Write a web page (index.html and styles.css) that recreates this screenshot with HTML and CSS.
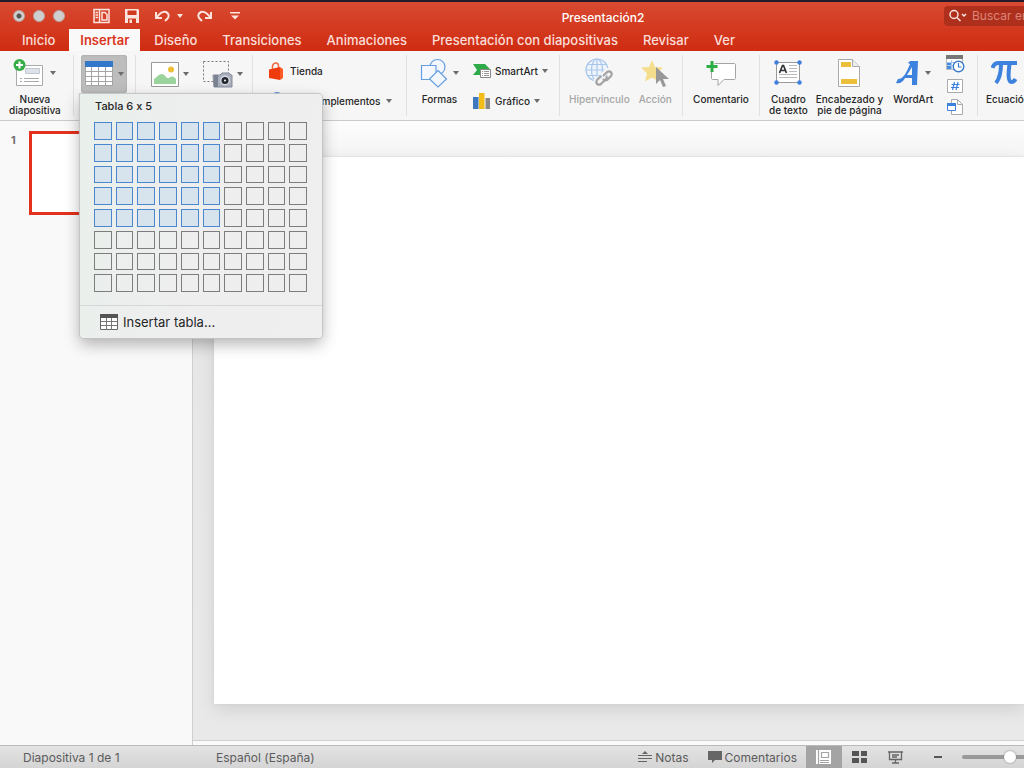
FILE: index.html
```html
<!DOCTYPE html>
<html lang="es">
<head>
<meta charset="utf-8">
<title>Presentación2</title>
<link rel="stylesheet" href="styles.css">
</head>
<body>
<header class="header">
  <div class="titlebar">
    <div class="lights">
      <button class="light light-dirty" aria-label="Cerrar"></button>
      <button class="light" aria-label="Minimizar"></button>
      <button class="light" aria-label="Ampliar"></button>
    </div>
    <div class="quick">
      <button class="plain" aria-label="Diseño de ventana"><svg width="17" height="16" viewBox="0 0 17 16" fill="none" stroke="#fbe3de" stroke-width="1.500"><path d="M1 1.500h15v13H1zM6.500 1.500v13"/><path d="M9 4.500h3l2 2V12H9z"/><path d="M2.500 4.500h2.500M2.500 7h2.500M2.500 9.500h2.500"/></svg></button>
      <button class="plain" aria-label="Guardar"><svg width="16" height="16" viewBox="0 0 16 16"><path d="M1 1h13l1 1v13H1z" fill="#fbe3de"/><path d="M3.500 2.500h9V7h-9zM4 10.500h8V15H4z" fill="#d03b20"/><path d="M5.500 11.500h2.500V15H5.500z" fill="#fbe3de"/></svg></button>
      <button class="plain" aria-label="Deshacer"><svg width="17" height="14" viewBox="0 0 17 14" fill="none" stroke="#fbe3de" stroke-width="2"><path d="M2 3v6h6M2.500 8.500C6 4 9 2 12 3c3 1.500 3.500 4.500 1.500 6.500L11 12"/></svg></button>
      <button class="plain" aria-label="Opciones de deshacer"><svg width="6" height="4" viewBox="0 0 6 4"><path d="M0 0h6L3 4z" fill="#fbe3de"/></svg></button>
      <button class="plain" aria-label="Rehacer"><svg width="16" height="14" viewBox="0 0 16 14" fill="none" stroke="#fbe3de" stroke-width="2"><path d="M14 3v6H8M13.500 8.500C10 4 7 2 4 3 1 4.500.5 7.500 2.500 9.500L5 12"/></svg></button>
      <button class="plain" aria-label="Personalizar"><svg width="10" height="8" viewBox="0 0 10 8" fill="#fbe3de"><path d="M0 0h10v1.500H0zM1 3.500h8L5 7.500z"/></svg></button>
    </div>
    <h1 class="title">Presentación2</h1>
    <label class="search">
      <svg width="19" height="14" viewBox="0 0 19 14" fill="none" stroke="#fbe3de" stroke-width="1.500"><circle cx="5" cy="5.500" r="4"/><path d="M8 8.500l3.500 3.500M13 5l2 2 2-2"/></svg>
      <input class="search-input" type="text" placeholder="Buscar en la presentación" aria-label="Buscar en la presentación">
    </label>
  </div>
  <nav class="tabs">
    <a class="tab" href="#inicio">Inicio</a>
    <a class="tab tab-active" href="#insertar">Insertar</a>
    <a class="tab" href="#diseno">Diseño</a>
    <a class="tab" href="#transiciones">Transiciones</a>
    <a class="tab" href="#animaciones">Animaciones</a>
    <a class="tab" href="#presentacion">Presentación con diapositivas</a>
    <a class="tab" href="#revisar">Revisar</a>
    <a class="tab" href="#ver">Ver</a>
  </nav>
</header>

<div class="ribbon">
  <div class="group g-new">
    <button class="big">
      <span class="icon-row"><svg width="32" height="31" viewBox="0 0 32 31"><path d="M3.500 7.500h26v20h-26z" fill="#fff" stroke="#aaa"/><path d="M12.500 10.500h14v5h-14z" fill="#dde2ea" stroke="#c2c8d0"/><path d="M7 20.500h2M11 20.500h15M7 23.500h2M11 23.500h15" stroke="#aaa"/><circle cx="6.500" cy="7" r="6" fill="#35ad46"/><path d="M6.500 3.500v7M3 7h7" stroke="#fff" stroke-width="2"/></svg><i class="caret"></i></span>
      <span>Nueva<br>diapositiva</span>
    </button>
  </div>
  <div class="group g-table">
    <div class="menu-host">
      <button class="table-button" aria-label="Tabla" aria-expanded="true"><svg width="30" height="26" viewBox="0 0 30 26"><path d="M1 1h27v24H1z" fill="#fff"/><path d="M1.500 6v18.500h27V6M1 10.500h27M1 15.500h27M1 20.500h27M7.500 6v19M14.500 6v19M21.500 6v19" fill="none" stroke="#a5a5a5"/><path d="M1 0h28v6H1z" fill="#3478ca"/></svg><i class="caret"></i></button>
      <div class="popover">
        <div class="pop-title">Tabla 6 x 5</div>
        <div class="cells" id="cells"></div>
        <button class="pop-item"><svg width="18" height="16" viewBox="0 0 18 16"><path d="M.5.500h17v15H.5z" fill="#fff" stroke="#666"/><path d="M1 7.500h16M1 11.500h16M6.500 4v12M11.500 4v12" stroke="#777"/><path d="M0 0h18v4H0z" fill="#555"/></svg>Insertar tabla...</button>
      </div>
    </div>
  </div>
  <div class="group g-media">
    <button class="drop" aria-label="Imagen"><svg width="28" height="25" viewBox="0 0 28 25"><path d="M.5.500h27v24H.5z" fill="#fff" stroke="#999"/><path d="M3 22v-5c3-2 5-5 8-5 3 0 4 5 7 4 3-2 4-2 7 1v5z" fill="#9bd39c"/><circle cx="20" cy="7.500" r="3" fill="#eebe35"/></svg><i class="caret"></i></button>
    <button class="drop" aria-label="Captura de pantalla"><svg width="30" height="28" viewBox="0 0 30 28"><path d="M.5 1.500h25v20H.5z" fill="none" stroke="#777" stroke-dasharray="2 2"/><path d="M10 15h7l2-2h7l2 2h1v12H11z" fill="#aab0be" stroke="#858b99"/><path d="M11 15h4v12h-4z" fill="#7b8292"/><circle cx="22" cy="20.500" r="5" fill="#d6d9df"/><circle cx="22" cy="20.500" r="3.500" fill="#242830"/><circle cx="22" cy="20.500" r="1" fill="#fff"/></svg><i class="caret"></i></button>
  </div>
  <div class="group g-addins stack">
    <button class="small"><svg width="16" height="19" viewBox="0 0 16 19"><path d="M4.500 7V4c1-4 6-4 6 0v2" fill="none" stroke="#f26a3d" stroke-width="1.500"/><path d="M1 7.500L12 5v13L1 16z" fill="#f03c0c"/><path d="M12 5l3 2v9l-3 2z" fill="#ff5b26"/></svg>Tienda</button>
    <button class="small"><svg width="16" height="18" viewBox="0 0 16 18"><circle cx="9" cy="4" r="4" fill="#4a88cf"/><path d="M2 8h12v8H2z" fill="#4a88cf"/></svg>Mis complementos<i class="caret"></i></button>
  </div>
  <div class="group g-shapes">
    <button class="big">
      <span class="icon-row"><svg width="28" height="30" viewBox="0 0 28 30" fill="#f4f8fe" stroke="#659fe0" stroke-width="1.200"><circle cx="17.500" cy="9" r="7.500"/><path d="M1.500 7.500h14.500v14H1.500z"/><path d="M18 12.500l8.500 8.500-8.500 8-8.500-8z"/></svg><i class="caret"></i></span>
      <span>Formas</span>
    </button>
    <div class="stack">
      <button class="small"><svg width="18" height="16" viewBox="0 0 18 16"><path d="M0 1h12l5 5h-9v6H0l4-5z" fill="#2eaa48"/><path d="M7.500 6.500h10v8h-10z" fill="#fff" stroke="#888"/><path d="M9 8.500h1M11 8.500h5M9 10.500h1M11 10.500h5M9 12.500h1M11 12.500h5" stroke="#999"/></svg>SmartArt<i class="caret"></i></button>
      <button class="small"><svg width="18" height="17" viewBox="0 0 18 17"><path d="M0 4h5.500v12H0z" fill="#3e79c0"/><path d="M6 0h5.500v16H6z" fill="#f2bd18"/><path d="M12.500 5h4.500v11h-4.500z" fill="#888"/></svg>Gráfico<i class="caret"></i></button>
    </div>
  </div>
  <div class="group g-links">
    <button class="big off" disabled>
      <span class="icon-row"><svg width="30" height="30" viewBox="0 0 30 30" fill="none" stroke="#a9c7ea" stroke-width="1.200"><circle cx="13" cy="12" r="11" fill="#edf4fc"/><path d="M2 12h22M4 6.500h18M4 17.500h15M13 1v22"/><ellipse cx="13" cy="12" rx="5.500" ry="11"/><g stroke="#f6f6f6" stroke-width="5"><path d="M18 18l5-5c3-2 6 1 4 4l-4 4M22 18l-1 3-5 5c-3 2-5-1-4-3l4-4"/></g><g stroke="#a3a3a3" stroke-width="2.200"><path d="M19 18l4-4c3-2 6 1 4 4l-4 4c-2 1-3 0-4-1M22 18c1 1 1 3-1 4l-4 4c-3 2-6-1-4-4l4-4"/></g></svg></span>
      <span>Hipervínculo</span>
    </button>
    <button class="big off" disabled>
      <span class="icon-row"><svg width="28" height="28" viewBox="0 0 28 28"><path d="M11 1l3 7 8 .5-6 6 2 8-7-4-7 4 2-8-6-6 8-.5z" fill="#f5dd8e"/><path d="M15 8v17l4-4 3 7 3-1-3-7h6z" fill="#989898"/></svg></span>
      <span>Acción</span>
    </button>
  </div>
  <div class="group g-comment">
    <button class="big">
      <span class="icon-row"><svg width="30" height="28" viewBox="0 0 30 28"><path d="M7 4.500h21c1 0 1.500.5 1.500 1.500v13c0 1-.5 1.500-1.500 1.500H18l-6 6v-6H7c-1 0-1.500-.5-1.500-1.500V6c0-1 .5-1.500 1.500-1.500z" fill="#fff" stroke="#a5a5a5"/><path d="M6 2v11M.5 7.500h11" stroke="#f6f6f6" stroke-width="5"/><path d="M6 2v11M.5 7.500h11" stroke="#2eac46" stroke-width="3"/></svg></span>
      <span>Comentario</span>
    </button>
  </div>
  <div class="group g-text">
    <button class="big">
      <span class="icon-row"><svg width="28" height="26" viewBox="0 0 28 26"><path d="M2.500 2.500h23v20h-23z" fill="#fff" stroke="#999"/><path d="M15 5.500h8M15 8.500h8M15 11.500h8M5 14.500h18M5 17.500h18" stroke="#bbb"/><path d="M5.500 13l3-7.500h1l3 7.500M6.500 10.500h5" fill="none" stroke="#333" stroke-width="1.700"/><g fill="#3d7fdb"><circle cx="2.500" cy="2.500" r="2.200"/><circle cx="25.500" cy="2.500" r="2.200"/><circle cx="2.500" cy="22.500" r="2.200"/><circle cx="25.500" cy="22.500" r="2.200"/></g></svg></span>
      <span>Cuadro<br>de texto</span>
    </button>
    <button class="big">
      <span class="icon-row"><svg width="22" height="28" viewBox="0 0 22 28"><path d="M.5.500h14l7 7v20H.5z" fill="#fff" stroke="#aaa"/><path d="M14.500.500v7h7" fill="#eee" stroke="#aaa"/><path d="M3 3h10v5H3zM3 20h16v5H3z" fill="#ecbf3a"/></svg></span>
      <span>Encabezado y<br>pie de página</span>
    </button>
    <button class="big wordart">
      <span class="icon-row"><svg width="24" height="28" viewBox="0 0 24 28"><path d="M0 24l2-4c6 0 9-8 12-15l-2-1 2-2h8l-1 24h-5v-7H9c-2 4-5 6-9 5zM16 8l-5 8h5z" fill="#3d82dd" fill-rule="evenodd"/></svg><i class="caret"></i></span>
      <span>WordArt</span>
    </button>
    <div class="mini-stack">
      <button class="plain" aria-label="Fecha y hora"><svg width="19" height="18" viewBox="0 0 19 18"><path d="M.5 1.500h16v13H.5z" fill="#fff" stroke="#bbb"/><path d="M0 0h17v4H0z" fill="#777"/><path d="M1 8h5v6H1z" fill="#4a8ce0"/><path d="M1 7.500h8M1 10.500h6M5.500 5v10" stroke="#a9c8ef"/><circle cx="12.500" cy="11.500" r="5.300" fill="#fff" stroke="#3b79c9" stroke-width="1.400"/><path d="M12.500 8v4h3" fill="none" stroke="#3b79c9" stroke-width="1.200"/></svg></button>
      <button class="plain" aria-label="Número de diapositiva"><svg width="17" height="14" viewBox="0 0 17 14" fill="none"><path d="M1.500.500h15v13h-15z" fill="#fff" stroke="#aaa"/><path d="M8.500 3l-2 8M12 3l-2 8M5.500 5.500h8M5 8.500h8" stroke="#3d82dd" stroke-width="1.200"/></svg></button>
      <button class="plain" aria-label="Objeto"><svg width="17" height="17" viewBox="0 0 17 17" fill="#fff"><path d="M5.500.500h6l5 5v10h-11z" stroke="#aaa"/><path d="M11.500.500v5h5" fill="none" stroke="#aaa"/><path d="M1.500 5.500h8v6h-8z" stroke="#3d82dd"/><path d="M1 4h9v3H1z" fill="#3d82dd"/></svg></button>
    </div>
  </div>
  <div class="group g-equation">
    <button class="big">
      <span class="icon-row"><svg width="34" height="26" viewBox="0 0 34 26" fill="none" stroke="#3d82dd" stroke-width="4"><path d="M1.500 8c1-3.500 3-5 6-5H26"/><path d="M10 4c0 8-1 14-5 19"/><path d="M18.500 4c-1 8-2 18 2 18 2 0 3-1 4-3"/></svg></span>
      <span>Ecuación</span>
    </button>
  </div>
</div>

<main class="main">
  <aside class="thumbs">
    <span class="thumb-number">1</span>
    <button class="thumb" aria-label="Diapositiva 1"></button>
  </aside>
  <section class="stage">
    <div class="slide"></div>
    <div class="notes-edge"></div>
  </section>
</main>

<footer class="status">
  <span class="status-count">Diapositiva 1 de 1</span>
  <button class="status-lang">Español (España)</button>
  <div class="status-tools">
    <button class="status-button"><svg width="14" height="12" viewBox="0 0 14 12"><path d="M0 4.500h14M0 7.500h14M0 10.500h9" stroke="#666" stroke-width="1.200"/><path d="M4 3l3-3 3 3z" fill="#666"/></svg>Notas</button>
    <button class="status-button status-comments"><svg width="14" height="12" viewBox="0 0 14 12"><path d="M0 0h14v9H7l-3 3V9H0z" fill="#666"/></svg>Comentarios</button>
    <button class="view view-active" aria-label="Normal"><svg width="16" height="14" viewBox="0 0 16 14"><path d="M0 0h15v14H0z" fill="#fff"/><path d="M4 10.500h9M4 12.500h9M5.500 2.500h7v5h-7zM2.500 0v14" fill="none" stroke="#a4a4a4" stroke-width="1.200"/></svg></button>
    <button class="view" aria-label="Clasificador"><svg width="16" height="12" viewBox="0 0 16 12" fill="#555"><path d="M0 0h7v5H0zM9 0h6v5H9zM0 7h7v5H0zM9 7h6v5H9z"/></svg></button>
    <button class="view" aria-label="Presentación"><svg width="16" height="13" viewBox="0 0 16 13" fill="none" stroke="#666" stroke-width="1.300"><path d="M0 1h15M1.500 1v7.500h12V1M4 4h7M4 6h5M7.500 8.500V12M4 12h7"/></svg></button>
    <button class="view view-minus" aria-label="Reducir"><svg width="8" height="2" viewBox="0 0 8 2"><path d="M0 0h8v2H0z" fill="#555"/></svg></button>
    <input class="zoom" type="range" min="0" max="100" value="50" aria-label="Zoom">
  </div>
</footer>
<script src="cells.js"></script>
</body>
</html>
```

FILE: styles.css
```css
* { box-sizing: border-box; }
body {
  margin: 0;
  height: 100vh;
  display: flex;
  flex-direction: column;
  overflow: hidden;
  background: #fff;
  color: #262626;
  font-family: Inter, "Liberation Sans", sans-serif;
  font-size: 11px;
  font-feature-settings: "calt" 0;
}
button, input { font: inherit; color: inherit; font-feature-settings: inherit; }
button { border: 0; padding: 0; background: none; }
svg { display: block; flex: none; }

.header {
  border-top: 2px solid #241a2b;
  background: linear-gradient(#d84a31, #cf2c11);
}
.titlebar { display: flex; align-items: center; height: 27px; }
.lights { display: flex; gap: 8px; padding-left: 13px; width: 93px; }
.light {
  width: 12px;
  height: 12px;
  border: 1px solid #b9a5a0;
  border-radius: 50%;
  background: #cfcfcf;
}
.light-dirty { background: radial-gradient(circle, #555 0 2px, #cfcfcf 3px); }
.quick { display: flex; align-items: center; gap: 14px; }
.quick .plain:nth-child(4) { margin-left: -8px; }
.quick .plain:last-child { margin-left: 3px; }
.title {
  flex: 1;
  margin: 0;
  padding: 3px 0 0 22px;
  text-align: center;
  font-size: 12px;
  font-weight: 500;
  color: #fff;
}
.search {
  display: flex;
  align-items: center;
  width: 80px;
  height: 20px;
  padding-left: 5px;
  border-radius: 4px 0 0 4px;
  background: #af2f1d;
}
.search-input {
  flex: 1;
  min-width: 0;
  margin-left: 4px;
  padding: 0;
  border: 0;
  outline: 0;
  background: none;
  font-size: 12px;
}
.search-input::placeholder { color: #db8577; opacity: 1; }

.tabs { display: flex; gap: 3px; padding-left: 11px; height: 22px; }
.tab {
  padding: 0 11px;
  line-height: 22px;
  font-size: 13px;
  font-weight: 500;
  color: #fbded8;
  text-decoration: none;
  white-space: nowrap;
}
.tab-active { background: #f9f9f9; color: #dc3521; font-weight: 600; }

.ribbon {
  display: flex;
  height: 70px;
  padding: 4px 0;
  background: #f6f6f6;
  border-bottom: 1px solid #cbcbcb;
  position: relative;
  z-index: 1;
}
.group {
  flex: none;
  display: flex;
  align-items: flex-start;
  border-right: 1px solid #e1e1e1;
}
.g-new { width: 74px; padding-left: 9px; }
.g-table { width: 62px; padding-left: 7px; }
.g-media { width: 117px; padding: 4px 0 0 15px; gap: 14px; }
.g-addins { width: 154px; padding-left: 15px; }
.g-shapes { width: 153px; padding-left: 13px; gap: 14px; }
.g-links { width: 123px; padding-left: 9px; gap: 9px; }
.g-comment { width: 77px; justify-content: center; }
.g-text { width: 218px; padding-left: 9px; gap: 8px; }
.g-equation { padding-left: 8px; border-right: 0; }

.big {
  display: flex;
  flex-direction: column;
  align-items: center;
  font-size: 10px;
  font-weight: 500;
  line-height: 11px;
  white-space: nowrap;
}
.icon-row {
  display: flex;
  align-items: center;
  justify-content: center;
  gap: 5px;
  height: 39px;
  padding-bottom: 3px;
}
.off { color: #a5a5a5; }
.caret {
  flex: none;
  border: 3px solid transparent;
  border-top: 4px solid #6c6c6c;
  border-bottom: 0;
}
.drop { display: flex; align-items: center; gap: 4px; height: 30px; }
.stack { display: flex; flex-direction: column; gap: 10px; align-items: flex-start; }
.small {
  display: flex;
  align-items: center;
  gap: 4px;
  height: 20px;
  font-size: 10px;
  font-weight: 500;
  white-space: nowrap;
}
.g-addins { padding-top: 6px; }
.g-addins .small { gap: 6px; }
.g-shapes .stack { padding-top: 6px; }
.plain { display: block; }
.wordart { margin-left: 2px; }
.mini-stack { display: flex; flex-direction: column; gap: 6px; padding-left: 5px; }

.menu-host { position: relative; }
.table-button {
  display: flex;
  align-items: center;
  justify-content: center;
  gap: 4px;
  width: 46px;
  height: 38px;
  border-radius: 3px;
  background: #bdbdbd;
  box-shadow: inset 0 0 2px #999;
}
.popover {
  position: absolute;
  top: 39px;
  left: -1px;
  width: 242px;
  border-radius: 0 4px 4px 4px;
  background: linear-gradient(100deg, #e9f0eb, #eeeeef 45%, #efeff0);
  box-shadow: 0 0 1px 1px #c4c4c4, 0 6px 16px #0000004d;
}
.pop-title { padding: 5px 15px 0; line-height: 15px; font-weight: 500; }
.cells {
  display: grid;
  grid-template-columns: repeat(10, 1fr);
  grid-auto-rows: 1fr;
  gap: 4px;
  height: 170px;
  margin: 8px 15px 13px 14px;
}
.cell { border: 1px solid #7d7d7d; }
.cell-on { border-color: #4b87cf; background: #d7e3ed; }
.pop-item {
  display: flex;
  align-items: center;
  gap: 5px;
  width: 100%;
  height: 33px;
  padding-left: 20px;
  border-top: 1px solid #d5d8d8;
  font-size: 13px;
}

.main { flex: 1; min-height: 0; display: flex; }
.thumbs {
  flex: none;
  display: flex;
  align-items: flex-start;
  gap: 13px;
  width: 193px;
  padding: 10px 12px 0 11px;
  background: #f9f9f9;
  border-right: 1px solid #cfcfcf;
}
.thumb-number { line-height: 18px; font-weight: 700; color: #707070; }
.thumb { flex: 1; height: 84px; border: 3px solid #e2311c; background: #fff; }
.stage {
  flex: 1;
  display: flex;
  flex-direction: column;
  background: linear-gradient(#fdfdfd, #f4f4f4 36px, #e7e7e7 220px, #e9e9e9);
}
.slide {
  flex: 1;
  margin: 36px 0 36px 21px;
  background: #fff;
  box-shadow: 0 0 2px #ccc, 0 6px 16px #0000001a;
}
.notes-edge { height: 5px; background: #fafafa; border-top: 1px solid #cfcfcf; }

.status {
  display: flex;
  align-items: center;
  height: 23px;
  overflow: hidden;
  border-top: 1px solid #b9b9b9;
  background: linear-gradient(#e3e3e3, #d4d4d4);
  color: #5b5b5b;
  font-size: 12px;
  white-space: nowrap;
}
.status-count { width: 216px; padding-left: 23px; }
.status-tools { display: flex; align-items: center; flex: none; height: 100%; margin-left: auto; margin-right: -34px; }
.status-button { display: flex; align-items: center; gap: 3px; }
.status-comments { margin: 0 9px 0 19px; }
.view { display: grid; place-items: center; width: 36px; height: 100%; }
.view-active { background: #a4a4a4; }
.view-minus { width: 48px; }
.zoom { appearance: none; width: 96px; height: 4px; margin: 0; border-radius: 2px; background: #999; }
.zoom::-webkit-slider-thumb {
  appearance: none;
  width: 12px;
  height: 12px;
  border-radius: 50%;
  background: #fff;
  box-shadow: 0 0 2px #777;
}
```

FILE: cells.js
```js
const cells = document.getElementById("cells");
for (let row = 1; row <= 8; row++) {
  for (let col = 1; col <= 10; col++) {
    const cell = document.createElement("button");
    cell.className = row <= 5 && col <= 6 ? "cell cell-on" : "cell";
    cell.setAttribute("aria-label", `Tabla ${col} x ${row}`);
    cells.append(cell);
  }
}
```
